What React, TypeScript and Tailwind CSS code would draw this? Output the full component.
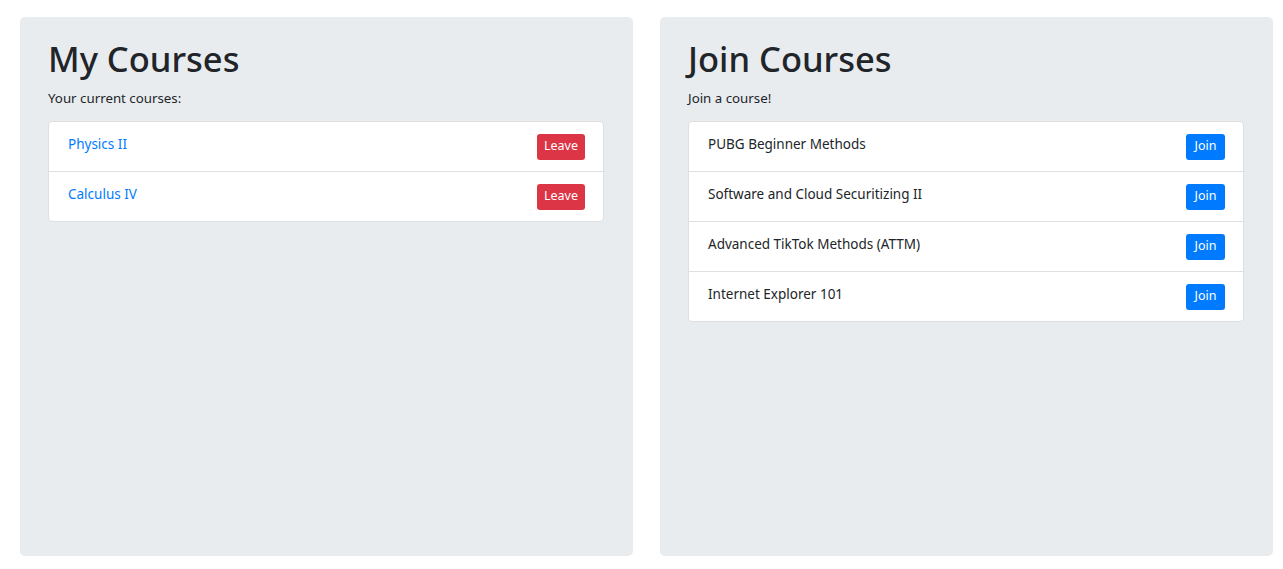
import React from 'react';

const myCourses = ['Physics II', 'Calculus IV'];
const openCourses = [
  'PUBG Beginner Methods',
  'Software and Cloud Securitizing II',
  'Advanced TikTok Methods (ATTM)',
  'Internet Explorer 101',
];

function Panel({ title, lead, children }: { title: string; lead: string; children: React.ReactNode }) {
  return (
    <div className="h-[539px] w-[613px] rounded-[5px] bg-[#e9ecef] pl-[28px] pr-[29px] pt-[19px]">
      <h1 className="text-[34.5px] leading-[45px] font-medium text-[#212529]">{title}</h1>
      <p className="mt-[7px] text-[13.3px] leading-[21px] text-[#212529]">{lead}</p>
      <ul className="mt-[12px] rounded-[4px] border border-[#dfdfdf] bg-white">{children}</ul>
    </div>
  );
}

export default function App() {
  return (
    <div
      className="flex gap-[27px] pl-[20px] pt-[17px]"
      style={{ fontFamily: '"Noto Sans", "Open Sans", sans-serif' }}
    >
      <Panel title="My Courses" lead="Your current courses:">
        {myCourses.map((c, i) => (
          <li
            key={c}
            className={`flex items-center justify-between pl-[19px] pr-[18px] ${i > 0 ? 'h-[50px] border-t border-[#dfdfdf]' : 'h-[49px]'}`}
          >
            <a href="#" className="text-[13.5px] text-[#007bff] -mt-[5px]">
              {c}
            </a>
            <button className="h-[26px] rounded-[3px] bg-[#dc3545] px-[7px] text-[12.5px] text-white">
              Leave
            </button>
          </li>
        ))}
      </Panel>
      <Panel title="Join Courses" lead="Join a course!">
        {openCourses.map((c, i) => (
          <li
            key={c}
            className={`flex items-center justify-between pl-[19px] pr-[18px] ${i > 0 ? 'h-[50px] border-t border-[#dfdfdf]' : 'h-[49px]'}`}
          >
            <span className="text-[13.5px] text-[#212529] -mt-[5px]">{c}</span>
            <button className="h-[26px] rounded-[3px] bg-[#007bff] px-[8.5px] text-[12.5px] text-white">
              Join
            </button>
          </li>
        ))}
      </Panel>
    </div>
  );
}
